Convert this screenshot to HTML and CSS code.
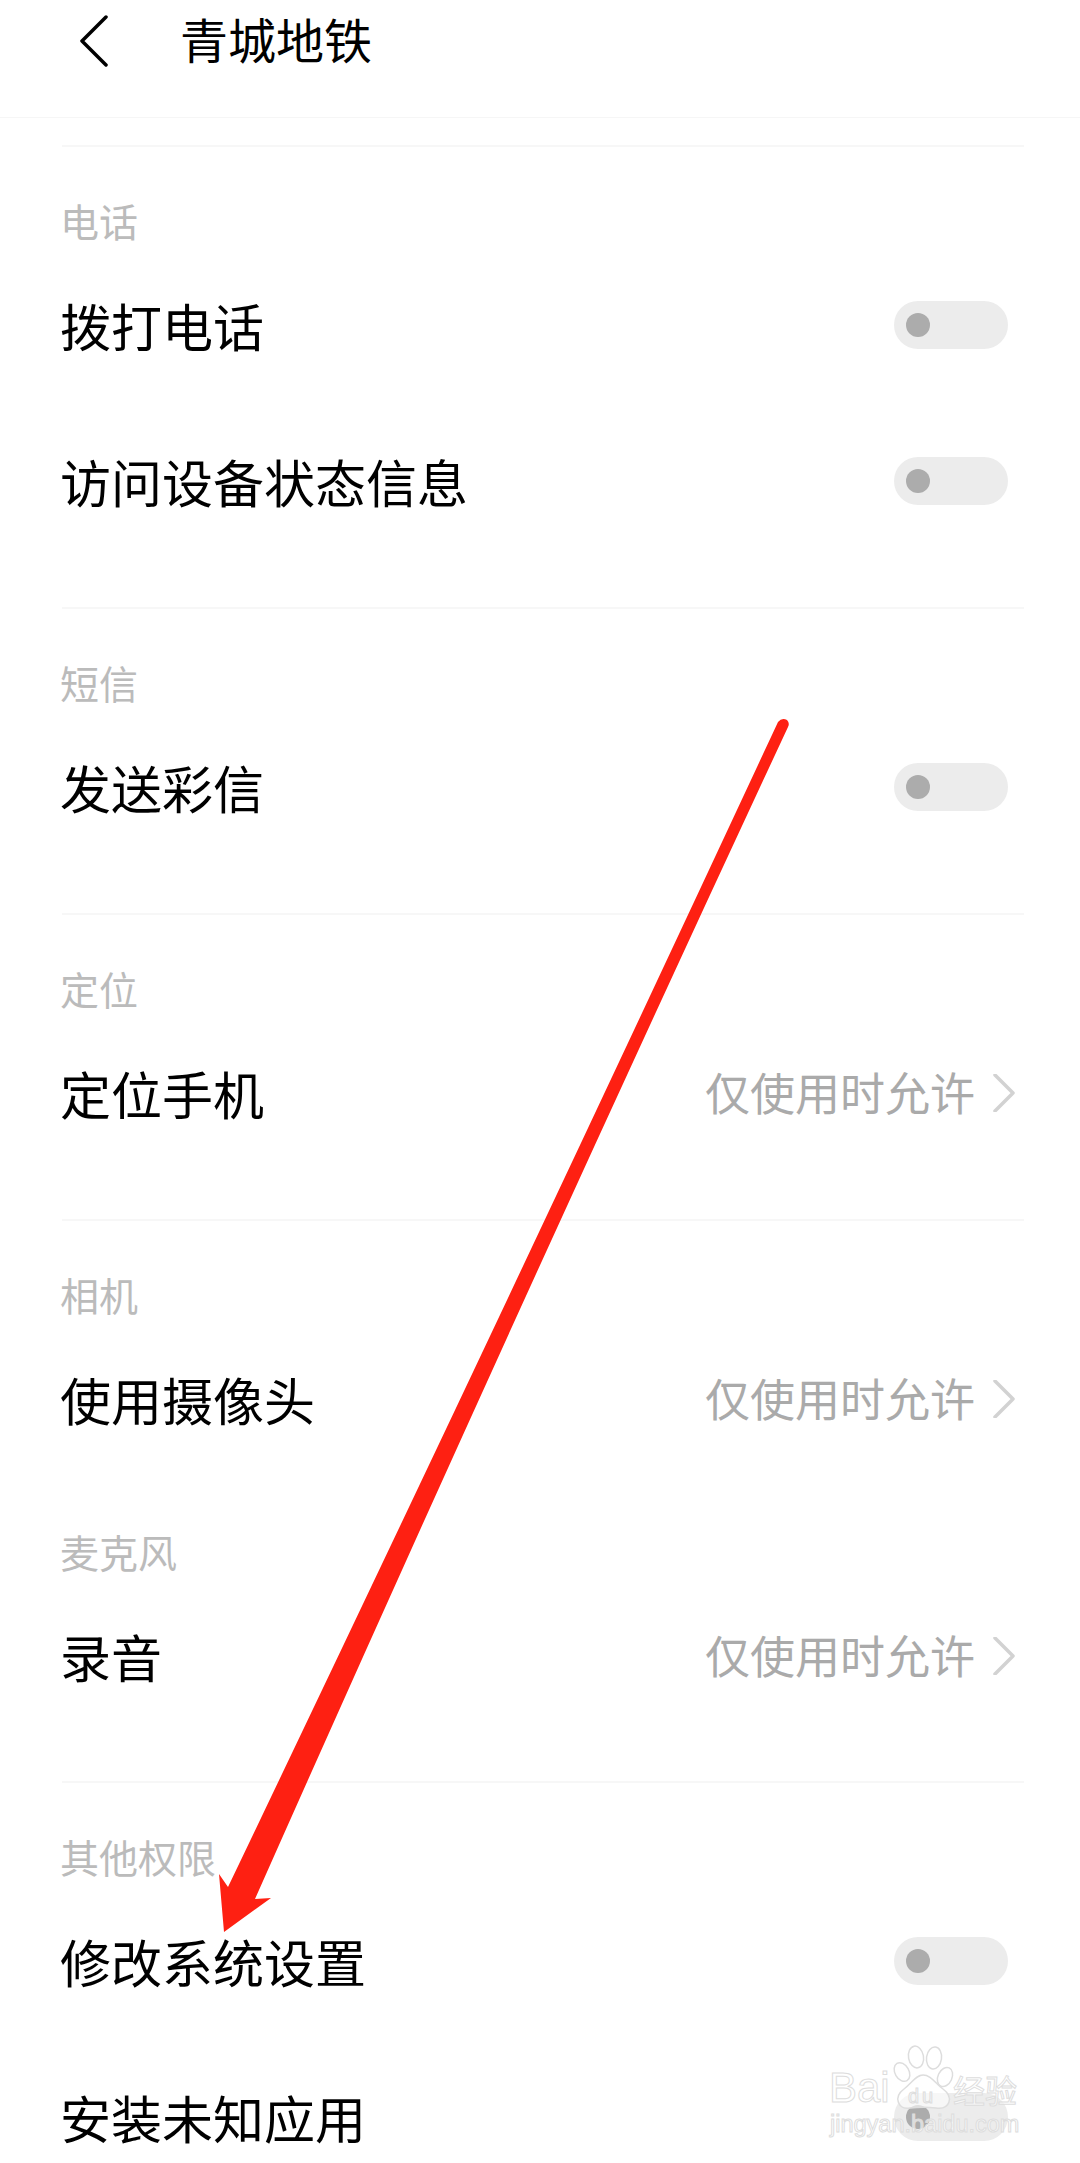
FILE: index.html
```html
<!DOCTYPE html>
<html lang="zh-CN">
<head>
  <meta charset="UTF-8">
  <meta name="viewport" content="width=device-width, initial-scale=1.0">
  <title>青城地铁</title>
  <link rel="stylesheet" href="styles.css">
</head>
<body>
  <div class="page">
    <header class="top-bar">
      <svg class="back-icon" width="30" height="52" viewBox="0 0 30 52"><path d="M27 2 L3 26 L27 50" /></svg>
      <h1>青城地铁</h1>
    </header>

    <main class="list">
      <section class="group">
        <h2>电话</h2>
        <div class="row"><span class="name">拨打电话</span><i class="toggle"></i></div>
        <div class="row"><span class="name">访问设备状态信息</span><i class="toggle"></i></div>
      </section>

      <section class="group">
        <h2>短信</h2>
        <div class="row"><span class="name">发送彩信</span><i class="toggle"></i></div>
      </section>

      <section class="group">
        <h2>定位</h2>
        <div class="row">
          <span class="name">定位手机</span>
          <span class="value"><span class="value-text">仅使用时允许</span><svg class="chevron" width="22" height="38" viewBox="0 0 22 38"><path d="M2 1 L20 19 L2 37" /></svg></span>
        </div>
      </section>

      <section class="group">
        <h2>相机</h2>
        <div class="row">
          <span class="name">使用摄像头</span>
          <span class="value"><span class="value-text">仅使用时允许</span><svg class="chevron" width="22" height="38" viewBox="0 0 22 38"><path d="M2 1 L20 19 L2 37" /></svg></span>
        </div>
      </section>

      <section class="group no-line">
        <h2>麦克风</h2>
        <div class="row">
          <span class="name">录音</span>
          <span class="value"><span class="value-text">仅使用时允许</span><svg class="chevron" width="22" height="38" viewBox="0 0 22 38"><path d="M2 1 L20 19 L2 37" /></svg></span>
        </div>
      </section>

      <section class="group">
        <h2>其他权限</h2>
        <div class="row"><span class="name">修改系统设置</span><i class="toggle"></i></div>
        <div class="row"><span class="name">安装未知应用</span><i class="toggle"></i></div>
      </section>
    </main>

    <!-- red arrow drawn over the screenshot -->
    <svg class="arrow" width="1080" height="2163" viewBox="0 0 1080 2163">
      <path d="M778 722 Q782 717 787 720 Q790 723 788 727 Q515 1313 255 1899 L271 1898 L224 1932 L219 1874 L228 1887 Q507 1304 778 722 Z" fill="#fe2012" />
    </svg>

    <div class="watermark">
      <svg class="paw" width="64" height="70" viewBox="0 0 64 70">
        <ellipse cx="10" cy="30" rx="7" ry="10" transform="rotate(-30 10 30)" />
        <ellipse cx="24" cy="15" rx="7.500" ry="11" transform="rotate(-10 24 15)" />
        <ellipse cx="42" cy="16" rx="7.500" ry="11" transform="rotate(8 42 16)" />
        <ellipse cx="53" cy="35" rx="7" ry="10" transform="rotate(25 53 35)" />
        <path d="M31 33 C24 33 20 41 12 47 C1 55 6 68 18 66 C26 65 37 65 44 66 C58 68 62 55 51 47 C43 41 39 33 31 33 Z" />
      </svg>
      <span class="wm-bai">Bai</span>
      <span class="wm-du">du</span>
      <span class="wm-cn">经验</span>
      <span class="wm-url">jingyan.baidu.com</span>
    </div>
  </div>
</body>
</html>
```

FILE: styles.css
```css
html, body {
  margin: 0;
  padding: 0;
  background-color: #fff;
}

body {
  font-family: "Noto Sans CJK SC", "Noto Sans", sans-serif;
  color: #000;
}

.page {
  position: relative;
  height: 2163px;
  overflow: hidden;
}

.top-bar {
  display: flex;
  align-items: center;
  height: 81px;
  padding: 0 0 36px 79px;
  border-bottom: 1px solid #f6f6f6;
}

.back-icon {
  margin-right: 71px;
}

.back-icon path {
  fill: none;
  stroke: #000;
  stroke-width: 3.500;
  stroke-linecap: round;
  stroke-linejoin: round;
}

.top-bar h1 {
  margin: 0 0 5px;
  font-size: 48px;
  font-weight: 400;
  line-height: 76px;
}

.list {
  margin: 27px 56px 0 62px;
}

.group {
  border-top: 2px solid #f7f7f7;
  padding: 46px 0 48px;
}

.group h2 {
  margin: 0 0 0 -2px;
  height: 54px;
  line-height: 54px;
  font-size: 39px;
  font-weight: 400;
  color: #bbb;
}

.group.no-line {
  border-top: none;
  margin-top: -1px;
  padding: 0 0 47px;
}

.row {
  display: flex;
  justify-content: space-between;
  align-items: center;
  height: 156px;
  font-size: 51px;
}

.name {
  margin-left: -2px;
}

.toggle {
  position: relative;
  display: block;
  width: 114px;
  height: 48px;
  margin-right: 16px;
  border-radius: 24px;
  background-color: #ececec;
}

.toggle::before {
  content: "";
  position: absolute;
  left: 12px;
  top: 12px;
  width: 24px;
  height: 24px;
  border-radius: 50%;
  background-color: #acacac;
}

.value {
  display: flex;
  align-items: center;
  font-size: 45px;
  color: #aaa;
}

.value-text {
  padding-bottom: 3px;
}

.chevron {
  margin: 0 9px 0 18px;
}

.chevron path {
  fill: none;
  stroke: #d2d2d2;
  stroke-width: 3.500;
  stroke-linecap: round;
  stroke-linejoin: round;
}

.arrow {
  position: absolute;
  left: 0;
  top: 0;
}

.watermark {
  position: absolute;
  left: 0;
  top: 0;
  width: 1080px;
  height: 2163px;
  color: rgba(255, 255, 255, 0.6);
  -webkit-text-stroke: 1px #dddddd;
  font-family: "Liberation Sans", sans-serif;
}

.watermark span {
  position: absolute;
  line-height: 1;
  white-space: nowrap;
}

.paw {
  position: absolute;
  left: 892px;
  top: 2042px;
}

.paw ellipse, .paw path {
  fill: rgba(255, 255, 255, 0.6);
  stroke: #dddddd;
  stroke-width: 1.500;
}

.wm-bai {
  left: 829px;
  top: 2067px;
  font-size: 42px;
}

.wm-du {
  left: 908px;
  top: 2086px;
  font-size: 20px;
  letter-spacing: 3px;
}

.wm-cn {
  left: 953px;
  top: 2073px;
  font-size: 32px;
  font-family: "Noto Sans CJK SC", sans-serif;
}

.wm-url {
  left: 830px;
  top: 2113px;
  font-size: 23.500px;
}
```
